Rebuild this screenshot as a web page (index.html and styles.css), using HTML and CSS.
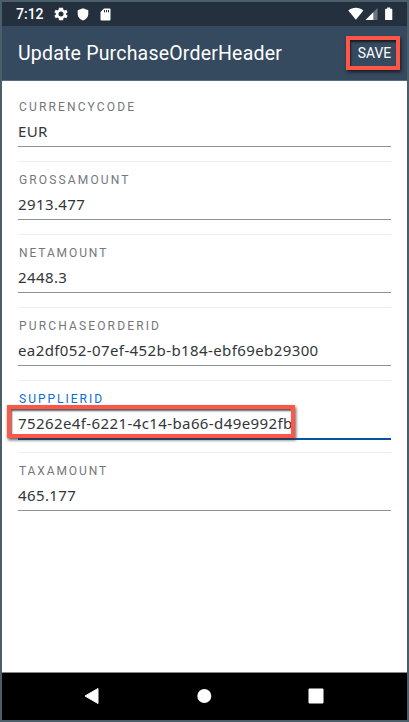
FILE: index.html
```html
<!DOCTYPE html>
<html lang="en">
<head>
<meta charset="utf-8">
<title>Update PurchaseOrderHeader</title>
<link rel="stylesheet" href="styles.css">
</head>
<body>
<div class="phone">
  <div class="status">
    <span class="time">7:12</span>
    <svg class="gear" width="14" height="14" viewBox="2 2 20 20"><path fill="#fff" fill-rule="evenodd" d="M19.4 13c0-.3.1-.6.1-1s0-.7-.1-1l2.1-1.600-2-3.500-2.500 1a7 7 0 0 0-1.700-1L15 3H9l-.400 2.900a7 7 0 0 0-1.700 1l-2.500-1-2 3.500L4.600 11a8 8 0 0 0 0 2l-2.100 1.600 2 3.500 2.500-1a7 7 0 0 0 1.700 1L9 21h6l.4-2.900a7 7 0 0 0 1.700-1l2.500 1 2-3.500zM12 15.600a3.600 3.600 0 1 1 0-7.200 3.600 3.600 0 0 1 0 7.200z"/></svg>
    <svg class="shield" width="12" height="13" viewBox="0 0 12 13"><path fill="#fff" d="M6 .3 11.300 2.300v3.800c0 3-2.200 5.400-5.300 6.400C2.900 11.500.7 9.100.7 6.100V2.300z"/></svg>
    <svg class="card" width="11" height="13" viewBox="0 0 11 13"><path fill="#fff" d="M4 .5h5.500q1 0 1 1v10q0 1-1 1h-8q-1 0-1-1V4z"/><path stroke="#24303d" stroke-width="1" d="M4.500 2v2.300M6.500 2v2.300M8.500 2v2.300"/></svg>
    <svg class="signals" width="46" height="14" viewBox="0 0 46 14"><path fill="#fff" d="M.3 3.500C4.500-.1 11.200-.1 15.400 3.500L7.900 12.700z"/><path fill="#6d7680" d="M29.500 1v12h-12z"/><path fill="#fff" d="M25.300 5.200V13h-7.800z"/><path fill="#fff" d="M37.700 1.800h1.500V.5h3v1.300h1.500q.6 0 .6.600v10q0 .6-.6.600h-6q-.6 0-.6-.6v-10q0-.6.6-.6z"/></svg>
  </div>
  <header class="bar">
    <h1 class="title">Update PurchaseOrderHeader</h1>
    <button class="save">SAVE</button>
  </header>
  <main class="form">
    <div class="field"><label class="label wide">CURRENCYCODE</label><div class="value">EUR</div></div>
    <div class="field"><label class="label wide">GROSSAMOUNT</label><div class="value">2913.477</div></div>
    <div class="field"><label class="label">NETAMOUNT</label><div class="value">2448.3</div></div>
    <div class="field"><label class="label wide">PURCHASEORDERID</label><div class="value">ea2df052-07ef-452b-b184-ebf69eb29300</div></div>
    <div class="field active"><label class="label">SUPPLIERID</label><div class="value">75262e4f-6221-4c14-ba66-d49e992fb<span class="marker"></span></div></div>
    <div class="field"><label class="label">TAXAMOUNT</label><div class="value">465.177</div></div>
  </main>
  <nav class="nav">
    <svg width="405" height="47" viewBox="0 0 405 47"><path fill="#fff" stroke="#fff" stroke-linejoin="round" d="M83 23 96 15.500v15z"/><circle cx="202.300" cy="23" r="7" fill="#fff"/><rect x="306.500" y="15.500" width="15" height="15" rx="1" fill="#fff"/></svg>
  </nav>
</div>
</body>
</html>
```
FILE: styles.css
```css
* { box-sizing: border-box; }
body { margin: 0; background: #4b5f6b; font-family: Roboto, sans-serif; }
.phone { width: 409px; height: 722px; border: 2px solid #4b5f6b; background: #fff; display: flex; flex-direction: column; overflow: hidden; }
.status { height: 24px; flex: none; background: #24303d; display: flex; align-items: center; padding-left: 14px; color: #fff; }
.status svg { flex: none; }
.time { width: 38px; font-size: 14px; font-weight: 500; letter-spacing: 0; line-height: 26px; }
.shield { margin-left: 9px; }
.card { margin-left: 11px; }
.signals { margin-left: auto; margin-right: 13px; }
.bar { height: 55px; flex: none; background: #354a5f; border-bottom: 1px solid #5b6c82; display: flex; align-items: center; justify-content: space-between; padding: 0 7px 0 16px; }
.title { margin: 0; font-size: 19.500px; font-weight: 400; letter-spacing: .2px; color: #fff; white-space: nowrap; }
.save { width: 54px; height: 34px; padding: 0 0 0 3px; border: 4px solid #ff5648; background: transparent; box-shadow: 1px 2px 3px #111c, inset 1px 2px 2px #111c; color: #fff; font: 13.900px Roboto, sans-serif; }
.form { flex: 1; padding: 7px 16px 0; }
.field { height: 72.900px; padding-top: 10px; border-top: 1px solid #eee; }
.field:first-child { border-top-color: transparent; }
.label { display: block; height: 17px; line-height: 17px; padding-left: 1px; font-size: 12px; letter-spacing: 1.900px; color: #74777a; }
.label.wide { letter-spacing: 2.150px; }
.value { position: relative; height: 31px; line-height: 30px; border-bottom: 1px solid #89919a; font-family: "Noto Sans", Roboto, sans-serif; font-size: 15px; letter-spacing: .400px; color: #32363a; white-space: nowrap; }
.active .label { color: #0a6ed1; letter-spacing: 2px; }
.active .value { height: 32px; border-bottom: 2px solid #0854a0; }
.marker { position: absolute; left: -11px; top: -3px; width: 288px; height: 33px; border: 4px solid #ff5648; box-shadow: 1px 2px 3px #333c, inset 1px 2px 2px #333c; }
.nav { height: 47px; flex: none; background: #000; box-shadow: 0 -1px #888; }
.nav svg { display: block; }
```
